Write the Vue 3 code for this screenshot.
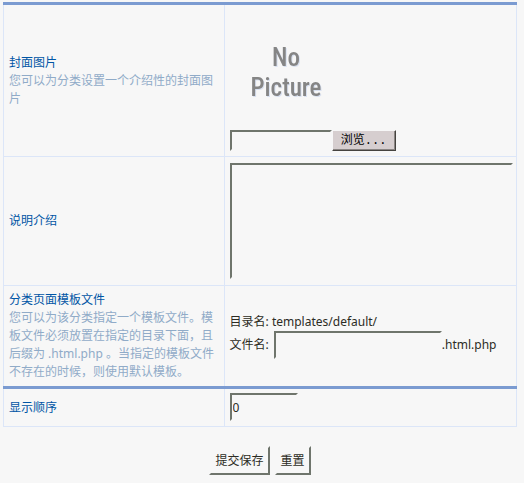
<template>
  <form class="category-form" @submit.prevent>
    <table class="options">
      <tbody>
        <tr class="group">
          <th scope="row">
            <label for="cover">封面图片</label>
            <p class="hint">您可以为分类设置一个介绍性的封面图片</p>
          </th>
          <td>
            <svg class="cover" viewBox="0 0 112 120" role="img" aria-label="No Picture">
              <text x="56" y="56">No</text>
              <text x="56" y="86">Picture</text>
            </svg>
            <div class="file-row">
              <input id="cover" v-model="form.cover" type="text" class="field file-path" />
              <button type="button" class="browse">浏览...</button>
            </div>
          </td>
        </tr>
        <tr>
          <th scope="row"><label for="description">说明介绍</label></th>
          <td>
            <textarea id="description" v-model="form.description" class="field description"></textarea>
          </td>
        </tr>
        <tr>
          <th scope="row">
            <label for="template">分类页面模板文件</label>
            <p class="hint">您可以为该分类指定一个模板文件。模板文件必须放置在指定的目录下面，且后缀为 .html.php 。当指定的模板文件不存在的时候，则使用默认模板。</p>
          </th>
          <td>
            <div>目录名: templates/default/</div>
            <div class="template-row">
              <span class="template-name">文件名:</span>
              <input id="template" v-model="form.template" type="text" class="field template" />
              <span>.html.php</span>
            </div>
          </td>
        </tr>
        <tr class="group">
          <th scope="row"><label for="order">显示顺序</label></th>
          <td><input id="order" v-model="form.order" type="text" class="field order" /></td>
        </tr>
      </tbody>
    </table>

    <div class="actions">
      <button type="submit" class="btn">提交保存</button>
      <button type="button" class="btn" @click="resetForm">重置</button>
    </div>
  </form>
</template>

<script setup>
import { reactive } from 'vue'

const defaults = { cover: '', description: '', template: '', order: '0' }
const form = reactive({ ...defaults })

function resetForm() {
  Object.assign(form, defaults)
}
</script>

<style>
body { background: #f7f7f7; }
</style>

<style scoped>
.category-form { padding: 2px 7px 8px 3px; color: #2c2c24; font: 12px/18px "Noto Sans", "Noto Sans CJK SC", sans-serif; }

.options { width: 100%; border-collapse: collapse; table-layout: fixed; }
.options th, .options td { border: 1px solid #dce6f8; padding: 5px; vertical-align: middle; }
.options td { padding-right: 3px; }
.options th { width: 43%; box-sizing: border-box; text-align: left; font-weight: normal; color: #0055a5; }
.options .group th, .options .group td { border-top: 3px solid #7b9bd1; }
.options .group:last-child th { padding: 5px; }
.options .group:last-child td { padding: 4px 5px 5px; }
.options label { display: block; }
.hint { margin: 0; color: #90abc8; }

.cover { display: block; width: 112px; height: 120px; font: 500 25px "Liberation Sans Narrow", "Roboto Condensed", "Open Sans Condensed", "DejaVu Sans Condensed", sans-serif; text-anchor: middle; fill: #858585; filter: drop-shadow(1px 1px #d8e0f0); }

.field { box-sizing: border-box; margin: 0; padding: 1px; border: 2px solid transparent; border-top-color: #6f756c; border-left-color: #6f756c; background: transparent; color: inherit; font: inherit; outline: none; }
.file-row { display: flex; }
.file-path { width: 102px; height: 21px; }
.browse { box-sizing: border-box; width: 64px; height: 21px; padding: 0; border: 1px solid #45433f; border-top-color: #f7f7f7; border-left-color: #f7f7f7; box-shadow: inset -1px -1px #8a8583; background: #d6cecf; color: #000; font: 12px/18px "Liberation Mono", "Noto Sans CJK SC", monospace; }
.description { display: block; width: 100%; height: 116px; margin: 1px 0; resize: none; }
.template-row { display: flex; align-items: center; }
.template-name { margin-right: 5px; }
.template { width: 168px; height: 28px; }
.order { display: block; width: 68px; height: 28px; }

.actions { display: flex; justify-content: center; gap: 5px; margin-top: 19px; }
.btn { height: 29px; padding: 0 4px; border: 2px solid transparent; border-right-color: #6f756c; border-bottom-color: #6f756c; background: transparent; color: inherit; font: inherit; }
</style>
